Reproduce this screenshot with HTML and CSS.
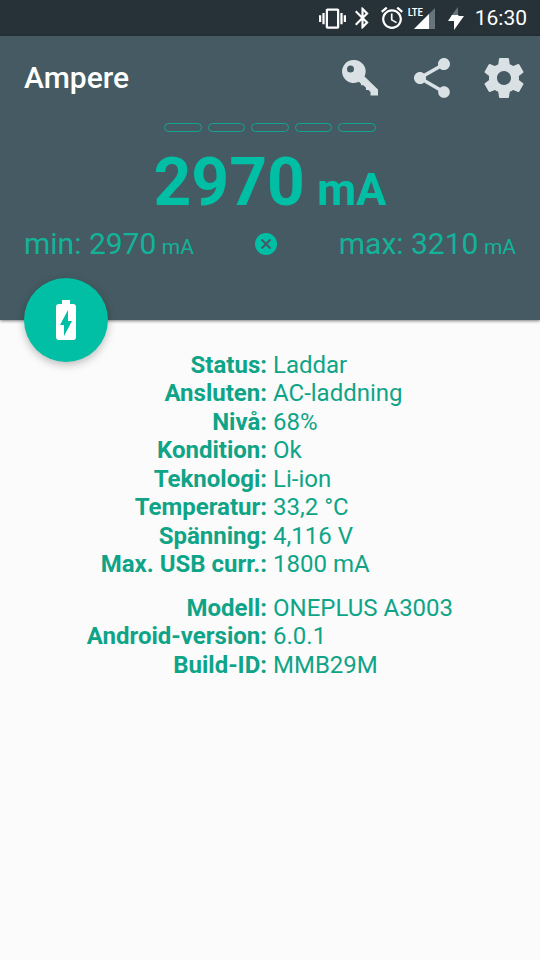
FILE: index.html
```html
<!DOCTYPE html>
<html lang="sv">
<head>
<meta charset="utf-8">
<meta name="viewport" content="width=device-width, initial-scale=1">
<title>Ampere</title>
<link rel="stylesheet" href="styles.css">
</head>
<body>
<div class="status-bar">
  <svg class="status-icon vibrate" viewBox="0 0 24 24" aria-hidden="true"><path d="M0 15h2V9H0v6zm3 2h2V7H3v10zm19-8v6h2V9h-2zm-3 8h2V7h-2v10zM16.500 3h-9C6.670 3 6 3.670 6 4.500v15c0 .83.67 1.500 1.500 1.500h9c.83 0 1.500-.67 1.500-1.500v-15c0-.83-.67-1.500-1.500-1.500zM16 19H8V5h8v14z"/></svg>
  <svg class="status-icon bluetooth" viewBox="5 2 14 20" aria-hidden="true"><path d="M17.710 7.710L12 2h-1v7.590L6.410 5 5 6.410 10.590 12 5 17.590 6.410 19 11 14.410V22h1l5.710-5.710-4.300-4.290 4.300-4.290zM13 5.830l1.880 1.880L13 9.590V5.830zm1.880 10.460L13 18.170v-3.760l1.880 1.880z"/></svg>
  <svg class="status-icon alarm" viewBox="2 2 20 20" aria-hidden="true"><path d="M22 5.720l-4.600-3.860-1.290 1.530 4.600 3.860L22 5.720zM7.880 3.390L6.600 1.860 2 5.710l1.290 1.530 4.590-3.850zM12.500 8H11v6l4.750 2.850.75-1.230-4-2.370V8zM12 4c-4.970 0-9 4.030-9 9s4.020 9 9 9c4.970 0 9-4.030 9-9s-4.030-9-9-9zm0 16c-3.870 0-7-3.130-7-7s3.130-7 7-7 7 3.130 7 7-3.130 7-7 7z"/></svg>
  <div class="signal">
    <svg class="signal-icon" viewBox="0 0 21 21" aria-hidden="true"><path class="dim" d="M0 21L21 0v21z"/><path d="M0 21L15 6v15z"/></svg>
    <span class="network">LTE</span>
  </div>
  <svg class="status-icon charge" viewBox="0 0 16 23" aria-hidden="true"><path class="dim" d="M10 0v9H3z"/><path d="M4 8h6l1 1h5L6 23v-9H0z"/></svg>
  <time class="clock">16:30</time>
</div>

<header class="header">
  <div class="toolbar">
    <h1 class="title">Ampere</h1>
    <div class="actions">
      <button class="action" type="button" aria-label="Pro">
        <svg viewBox="0 0 40 40" aria-hidden="true"><path fill-rule="evenodd" d="M13.500 2a11.500 11.500 0 1 0 4 22.300l1.500-.6 2 2v1.500h2.500l2.500 2.500V32h2.500l2 2v3.500H38v-6L24.500 18.500A11.500 11.500 0 0 0 13.500 2zM10.500 7.500a3.500 3.500 0 1 1 0 7 3.500 3.500 0 0 1 0-7z"/></svg>
      </button>
      <button class="action" type="button" aria-label="Dela">
        <svg viewBox="2 2 20 20" aria-hidden="true"><path d="M18 16.080c-.76 0-1.440.3-1.960.77L8.910 12.700c.05-.23.09-.46.09-.7s-.04-.47-.09-.7l7.050-4.110c.54.5 1.250.81 2.040.81 1.660 0 3-1.340 3-3s-1.340-3-3-3-3 1.340-3 3c0 .24.04.47.09.7L8.040 9.810C7.500 9.310 6.790 9 6 9c-1.660 0-3 1.340-3 3s1.340 3 3 3c.79 0 1.500-.31 2.040-.81l7.120 4.160c-.05.21-.08.43-.08.65 0 1.610 1.310 2.920 2.920 2.920s2.920-1.310 2.920-2.920-1.310-2.920-2.920-2.920z"/></svg>
      </button>
      <button class="action" type="button" aria-label="Inställningar">
        <svg viewBox="2 2 20 20" aria-hidden="true"><path d="M19.430 12.980c.04-.32.07-.64.07-.98s-.03-.66-.07-.98l2.110-1.650c.19-.15.24-.42.12-.64l-2-3.460c-.12-.22-.39-.3-.61-.22l-2.490 1c-.52-.4-1.080-.73-1.690-.98l-.38-2.650C14.460 2.180 14.250 2 14 2h-4c-.25 0-.46.18-.49.42l-.38 2.650c-.61.25-1.170.59-1.690.98l-2.490-1c-.23-.09-.49 0-.61.22l-2 3.460c-.13.22-.07.49.12.64l2.110 1.650c-.04.32-.07.65-.07.98s.03.66.07.98l-2.110 1.650c-.19.15-.24.42-.12.64l2 3.460c.12.22.39.3.61.22l2.490-1c.52.4 1.080.73 1.690.98l.38 2.650c.03.24.24.42.49.42h4c.25 0 .46-.18.49-.42l.38-2.650c.61-.25 1.170-.59 1.690-.98l2.490 1c.23.09.49 0 .61-.22l2-3.460c.12-.22.07-.49-.12-.64l-2.110-1.650zM12 15.500c-1.930 0-3.500-1.570-3.500-3.500s1.570-3.500 3.500-3.500 3.500 1.570 3.500 3.500-1.570 3.500-3.500 3.500z"/></svg>
      </button>
    </div>
  </div>

  <div class="meter" aria-hidden="true"><i></i><i></i><i></i><i></i><i></i></div>
  <p class="current">2970 <span class="current-unit">mA</span></p>
  <div class="range">
    <p class="limit">min: 2970 <span class="limit-unit">mA</span></p>
    <button class="reset" type="button" aria-label="Återställ">
      <svg viewBox="0 0 22 22" aria-hidden="true"><circle cx="11" cy="11" r="11"/><path class="cross" d="M6.500 6.500l9 9M15.500 6.500l-9 9"/></svg>
    </button>
    <p class="limit">max: 3210 <span class="limit-unit">mA</span></p>
  </div>

  <button class="fab" type="button" aria-label="Batteri">
    <svg viewBox="0 0 24 24" aria-hidden="true"><path d="M15.670 4H14V2h-4v2H8.330C7.600 4 7 4.600 7 5.330v15.330C7 21.400 7.600 22 8.330 22h7.330c.74 0 1.340-.6 1.340-1.330V5.330C17 4.600 16.400 4 15.670 4zM11 20v-5.500H9L13 7v5.500h2L11 20z"/></svg>
  </button>
</header>

<main class="details">
  <dl class="facts">
    <div class="fact"><dt>Status:</dt><dd>Laddar</dd></div>
    <div class="fact"><dt>Ansluten:</dt><dd>AC-laddning</dd></div>
    <div class="fact"><dt>Nivå:</dt><dd>68%</dd></div>
    <div class="fact"><dt>Kondition:</dt><dd>Ok</dd></div>
    <div class="fact"><dt>Teknologi:</dt><dd>Li-ion</dd></div>
    <div class="fact"><dt>Temperatur:</dt><dd>33,2 °C</dd></div>
    <div class="fact"><dt>Spänning:</dt><dd>4,116 V</dd></div>
    <div class="fact"><dt>Max. USB curr.:</dt><dd>1800 mA</dd></div>
  </dl>
  <dl class="facts">
    <div class="fact"><dt>Modell:</dt><dd>ONEPLUS A3003</dd></div>
    <div class="fact"><dt>Android-version:</dt><dd>6.0.1</dd></div>
    <div class="fact"><dt>Build-ID:</dt><dd>MMB29M</dd></div>
  </dl>
</main>
</body>
</html>
```
FILE: styles.css
```css
:root {
  --teal: #00bfa5;
  --teal-dark: #0fa487;
  --teal-soft: #13b39a;
  --slate: #455a62;
}

* { box-sizing: border-box; }

body {
  margin: 0;
  min-height: 100vh;
  background: #fbfbfb;
  font-family: Roboto, "Liberation Sans", sans-serif;
}

h1, p, dl, dd { margin: 0; }

svg { display: block; }

button {
  padding: 0;
  border: 0;
  background: none;
}

.status-bar {
  display: flex;
  align-items: center;
  justify-content: flex-end;
  height: 36px;
  padding-right: 13px;
  background: #263238;
  color: #fff;
  fill: #fff;
}

.dim { fill: #66757b; }

.vibrate { width: 27px; height: 27px; margin-right: 9px; }
.bluetooth { width: 15px; height: 22px; margin-right: 11px; }
.alarm { width: 22px; height: 22px; margin-right: 5px; overflow: visible; }
.charge { width: 16px; height: 23px; margin-right: 11px; }

.signal {
  position: relative;
  padding-left: 6px;
  margin-right: 13px;
}

.signal-icon { width: 21px; height: 21px; }

.network {
  position: absolute;
  left: 0;
  top: 0;
  font-family: "Roboto Condensed", "Open Sans Condensed", Roboto, sans-serif;
  font-size: 11px;
  font-weight: 500;
  line-height: 10px;
}

.clock {
  font-size: 21px;
  font-weight: 400;
  line-height: 36px;
}

.header {
  position: relative;
  height: 284px;
  padding: 0 24px;
  background: var(--slate);
  box-shadow: 0 1px 3px rgba(0, 0, 0, 0.5);
}

.toolbar {
  display: flex;
  align-items: center;
  justify-content: space-between;
  height: 84px;
  margin-right: -8px;
}

.title {
  color: #fff;
  font-size: 30px;
  font-weight: 500;
  line-height: 38px;
}

.actions {
  display: flex;
  gap: 32px;
}

.action svg {
  width: 40px;
  height: 40px;
  fill: #dae1e4;
}

.meter {
  display: flex;
  gap: 6px;
  width: 212px;
  margin: 3px auto 0;
}

.meter i {
  flex: 1;
  height: 9px;
  border: 1px solid #12a591;
  border-radius: 5px;
}

.current {
  margin-top: 11px;
  color: var(--teal);
  font-size: 66px;
  font-weight: 700;
  line-height: 80px;
  text-align: center;
}

.current-unit {
  margin-left: -4px;
  font-size: 45px;
  line-height: 1;
}

.range {
  display: flex;
  align-items: center;
  justify-content: space-between;
  margin-top: 6px;
}

.limit {
  color: var(--teal-soft);
  font-size: 30px;
  line-height: 30px;
  white-space: nowrap;
}

.limit-unit {
  margin-left: -2px;
  font-size: 21px;
  line-height: 1;
}

.reset svg {
  width: 22px;
  height: 22px;
  fill: var(--teal);
}

.cross {
  fill: none;
  stroke: var(--slate);
  stroke-width: 2;
}

.fab {
  position: absolute;
  left: 24px;
  bottom: -42px;
  display: grid;
  place-items: center;
  width: 84px;
  height: 84px;
  border-radius: 50%;
  background: var(--teal);
  box-shadow: 0 3px 8px rgba(0, 0, 0, 0.25);
}

.fab svg {
  width: 48px;
  height: 48px;
  fill: #fff;
}

.details {
  display: grid;
  gap: 15px;
  padding-top: 31px;
  color: var(--teal-dark);
  font-size: 24px;
  line-height: 28px;
}

.fact {
  display: grid;
  grid-template-columns: 1fr 1fr;
  column-gap: 6px;
}

.fact:nth-child(even) { padding-bottom: 1px; }

.fact dt {
  font-weight: 700;
  text-align: right;
}
```
